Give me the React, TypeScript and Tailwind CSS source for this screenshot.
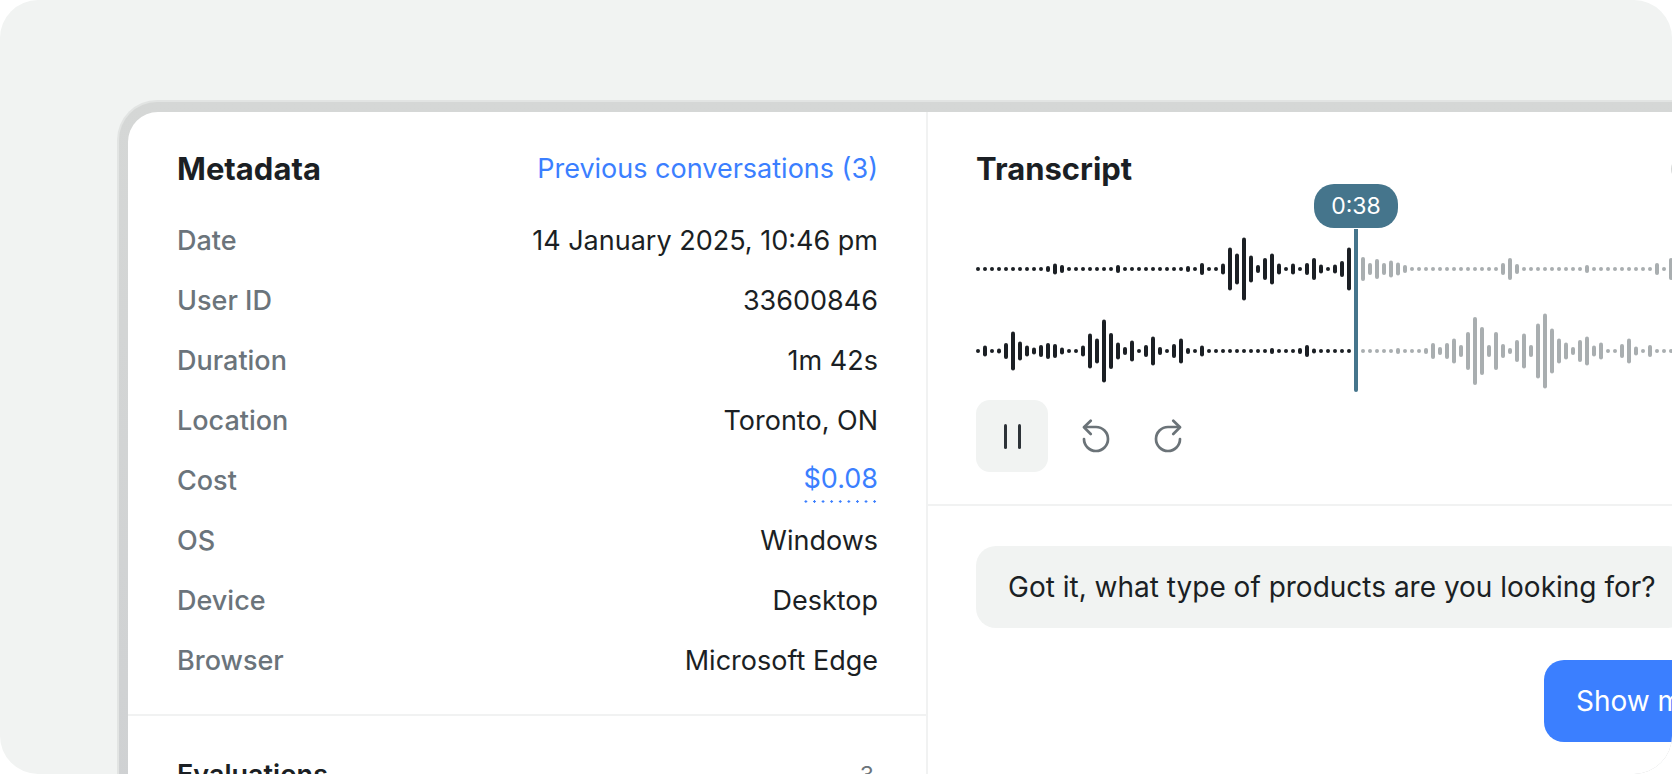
// heights in px, 0 means a plain dot
const topWave = [
  0, 0, 0, 0, 0, 0, 0, 0, 0, 0, 6, 11, 8, 0, 0, 0, 0, 0, 0, 0, 8, 0, 0, 0, 0, 0, 0, 0, 0, 0, 6, 0, 12, 0, 4, 11, 43, 31, 63, 27,
  8, 22, 31, 11, 0, 11, 0, 12, 22, 9, 0, 9, 16, 43, -1, 24, 12, 20, 12, 17, 13, 8, 0, 0, 0, 0, 0, 0, 0, 0, 0, 0, 0, 0, 0, 12, 22, 10, 0, 0,
  0, 0, 0, 0, 0, 0, 0, 8, 0, 0, 0, 0, 0, 0, 0, 0, 0, 12, 0, 22,
]

const bottomWave = [
  0, 11, 0, 5, 16, 39, 19, 11, 7, 12, 16, 14, 7, 0, 0, 11, 35, 25, 63, 36, 17, 8, 21, 0, 12, 29, 8, 0, 14, 25, 6, 0, 11, 0, 0, 0, 0, 0, 0, 0,
  0, 0, 6, 0, 0, 0, 6, 12, 5, 0, 0, 0, 0, 0, -1, 0, 0, 0, 0, 0, 6, 0, 0, 0, 6, 16, 8, 16, 25, 12, 38, 68, 48, 12, 38, 14, 6, 22, 35, 12, 55, 75,
  45, 25, 17, 8, 22, 29, 11, 17, 0, 0, 14, 25, 9, 0, 12, 0, 0, 0,
]

function Wave({ bars }: { bars: number[] }) {
  return (
    <svg width="720" height="76" viewBox="0 0 720 76" className="block shrink-0">
      {bars.map((h, i) => {
        if (h < 0) return null
        const height = h === 0 ? 4 : h
        return (
          <rect
            key={i}
            x={i * 7}
            y={38 - height / 2}
            width="4"
            height={height}
            rx="2"
            fill={i < 54 ? "#1b1f24" : "#a9aeb0"}
          />
        )
      })}
    </svg>
  )
}

function SkipBack() {
  return (
    <svg width="28" height="34" viewBox="0 0 28 34" fill="none" stroke="currentColor" strokeWidth="2.7" strokeLinecap="round" strokeLinejoin="round">
      <path d="M2 20a12 12 0 1 0 12-12H2.5" />
      <path d="M8.7 1.7 2 8.3 8.7 15" />
    </svg>
  )
}

function SkipForward() {
  return (
    <svg width="28" height="34" viewBox="0 0 28 34" fill="none" stroke="currentColor" strokeWidth="2.7" strokeLinecap="round" strokeLinejoin="round">
      <path d="M26 20a12 12 0 1 1-12-12h11.5" />
      <path d="M19.3 1.7 26 8.3 19.3 15" />
    </svg>
  )
}

const rows = [
  ["Date", "14 January 2025, 10:46 pm"],
  ["User ID", "33600846"],
  ["Duration", "1m 42s"],
  ["Location", "Toronto, ON"],
  ["Cost", "$0.08"],
  ["OS", "Windows"],
  ["Device", "Desktop"],
  ["Browser", "Microsoft Edge"],
]

export default function App() {
  return (
    <div className="h-[774px] w-[1672px] overflow-hidden bg-white font-['Inter',sans-serif] text-[27px] text-[#1b1f24]">
      <div className="h-[774px] overflow-hidden rounded-[38px] bg-[#f1f3f2] pl-[117px] pt-[100px]">
        <div className="w-[1900px] rounded-[40px] border-t-2 border-l-2 border-[#e2e4e3] bg-gradient-to-b from-[#d5d7d6] to-[#ced0d2] pl-[9px] pt-[10px]">
          <div className="flex h-[800px] rounded-tl-[30px] bg-white">
            {/* Metadata column */}
            <div className="w-[800px] shrink-0 border-r-2 border-[#f1f2f2]">
              <div className="pt-[39px] pr-[48px] pl-[49px]">
                <div className="flex h-9 items-center justify-between">
                  <h2 className="text-[31px] font-bold">Metadata</h2>
                  <span className="text-[#3b7fff]">Previous conversations (3)</span>
                </div>
                <div className="mt-[24px]">
                  {rows.map(([label, value]) => (
                    <div key={label} className="flex h-[60px] items-center justify-between">
                      <span className="font-medium text-[#6b747b]">{label}</span>
                      {label === "Cost" ? (
                        <span className="bg-[radial-gradient(circle,#3b7fff_1.2px,transparent_1.4px)] bg-[length:8.6px_3px] bg-bottom bg-repeat-x pb-[3px] text-[#3b7fff]">
                          {value}
                        </span>
                      ) : (
                        <span>{value}</span>
                      )}
                    </div>
                  ))}
                </div>
              </div>
              <div className="mt-[23px] border-t-2 border-[#f1f2f2] px-[49px] pt-[39px]">
                <div className="flex items-center justify-between">
                  <h3 className="font-semibold">Evaluations</h3>
                  <span className="pr-[3px] text-[23px] text-[#6b747b]">3</span>
                </div>
              </div>
            </div>

            {/* Transcript column */}
            <div className="flex-1">
              <div className="border-b-2 border-[#f1f2f2] pb-[32px] pl-[48px]">
                <div className="h-[119px] pt-[39px]">
                  <div className="flex h-9 w-[719px] items-center justify-between">
                    <h2 className="text-[31px] font-bold">Transcript</h2>
                    <span className="h-6 w-6 rounded-full border-2 border-[#d5d7d6]" />
                  </div>
                </div>
                <div className="relative flex w-[720px] flex-col gap-[6px]">
                  <Wave bars={topWave} />
                  <Wave bars={bottomWave} />
                  <div className="absolute top-[-2px] bottom-[-3px] left-[378px] w-1 rounded-b-full bg-[#45758c]" />
                  <div className="absolute top-[-47px] left-[338px] flex h-11 w-[84px] items-center justify-center rounded-[20px] bg-[#45758c] text-[23px] text-white">
                    0:38
                  </div>
                </div>
                <div className="mt-[11px] flex items-center gap-[34px]">
                  <button className="flex h-[72px] w-[72px] items-center justify-center gap-[11px] rounded-[14px] bg-[#f1f3f2]">
                    <span className="h-[25px] w-[3px] rounded-full bg-[#2d3238]" />
                    <span className="h-[25px] w-[3px] rounded-full bg-[#2d3238]" />
                  </button>
                  <div className="flex items-center gap-[44px] text-[#6b7378]">
                    <SkipBack />
                    <SkipForward />
                  </div>
                </div>
              </div>
              <div className="flex flex-col gap-8 pt-[40px] pl-[48px] text-[28px]">
                <div className="flex h-[82px] w-fit items-center rounded-[20px] bg-[#f1f3f2] px-8">
                  Got it, what type of products are you looking for?
                </div>
                <div className="ml-[568px] flex h-[82px] w-fit items-center rounded-[20px] bg-[#3b7fff] px-8 text-white">
                  Show me some options please
                </div>
              </div>
            </div>
          </div>
        </div>
      </div>
    </div>
  )
}
